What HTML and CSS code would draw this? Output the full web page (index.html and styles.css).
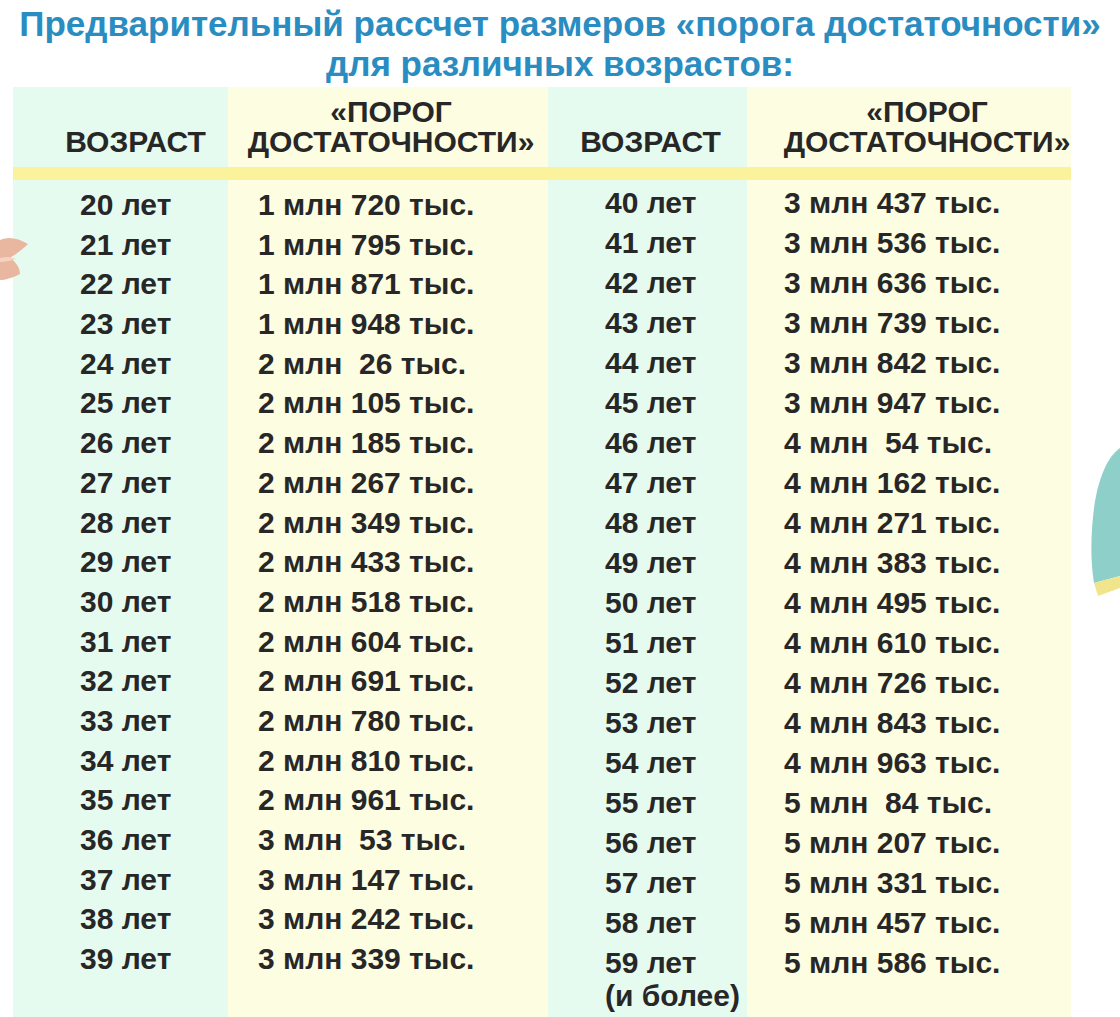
FILE: index.html
```html
<!DOCTYPE html>
<html lang="ru">
<head>
<meta charset="utf-8">
<title>Порог достаточности</title>
<link rel="stylesheet" href="styles.css">
</head>
<body>
<div class="page">
  <h1 class="title">Предварительный рассчет размеров «порога достаточности»<br>для различных возрастов:</h1>
  <div class="table">
    <div class="head">
      <div class="hc c1 h1">ВОЗРАСТ</div>
      <div class="hc c2 h2">«ПОРОГ<br>ДОСТАТОЧНОСТИ»</div>
      <div class="hc c3 h3">ВОЗРАСТ</div>
      <div class="hc c4 h4">«ПОРОГ<br>ДОСТАТОЧНОСТИ»</div>
    </div>
    <div class="stripe"></div>
    <div class="body">
      <div class="col c1 b1">
        <div class="r">20 лет</div><div class="r">21 лет</div><div class="r">22 лет</div><div class="r">23 лет</div><div class="r">24 лет</div>
        <div class="r">25 лет</div><div class="r">26 лет</div><div class="r">27 лет</div><div class="r">28 лет</div><div class="r">29 лет</div>
        <div class="r">30 лет</div><div class="r">31 лет</div><div class="r">32 лет</div><div class="r">33 лет</div><div class="r">34 лет</div>
        <div class="r">35 лет</div><div class="r">36 лет</div><div class="r">37 лет</div><div class="r">38 лет</div><div class="r">39 лет</div>
      </div>
      <div class="col c2 b2">
        <div class="r">1 млн 720 тыс.</div><div class="r">1 млн 795 тыс.</div><div class="r">1 млн 871 тыс.</div><div class="r">1 млн 948 тыс.</div><div class="r">2 млн  26 тыс.</div>
        <div class="r">2 млн 105 тыс.</div><div class="r">2 млн 185 тыс.</div><div class="r">2 млн 267 тыс.</div><div class="r">2 млн 349 тыс.</div><div class="r">2 млн 433 тыс.</div>
        <div class="r">2 млн 518 тыс.</div><div class="r">2 млн 604 тыс.</div><div class="r">2 млн 691 тыс.</div><div class="r">2 млн 780 тыс.</div><div class="r">2 млн 810 тыс.</div>
        <div class="r">2 млн 961 тыс.</div><div class="r">3 млн  53 тыс.</div><div class="r">3 млн 147 тыс.</div><div class="r">3 млн 242 тыс.</div><div class="r">3 млн 339 тыс.</div>
      </div>
      <div class="col c3 b3">
        <div class="r">40 лет</div><div class="r">41 лет</div><div class="r">42 лет</div><div class="r">43 лет</div><div class="r">44 лет</div>
        <div class="r">45 лет</div><div class="r">46 лет</div><div class="r">47 лет</div><div class="r">48 лет</div><div class="r">49 лет</div>
        <div class="r">50 лет</div><div class="r">51 лет</div><div class="r">52 лет</div><div class="r">53 лет</div><div class="r">54 лет</div>
        <div class="r">55 лет</div><div class="r">56 лет</div><div class="r">57 лет</div><div class="r">58 лет</div><div class="r">59 лет</div>
        <div class="r more">(и более)</div>
      </div>
      <div class="col c4 b4">
        <div class="r">3 млн 437 тыс.</div><div class="r">3 млн 536 тыс.</div><div class="r">3 млн 636 тыс.</div><div class="r">3 млн 739 тыс.</div><div class="r">3 млн 842 тыс.</div>
        <div class="r">3 млн 947 тыс.</div><div class="r">4 млн  54 тыс.</div><div class="r">4 млн 162 тыс.</div><div class="r">4 млн 271 тыс.</div><div class="r">4 млн 383 тыс.</div>
        <div class="r">4 млн 495 тыс.</div><div class="r">4 млн 610 тыс.</div><div class="r">4 млн 726 тыс.</div><div class="r">4 млн 843 тыс.</div><div class="r">4 млн 963 тыс.</div>
        <div class="r">5 млн  84 тыс.</div><div class="r">5 млн 207 тыс.</div><div class="r">5 млн 331 тыс.</div><div class="r">5 млн 457 тыс.</div><div class="r">5 млн 586 тыс.</div>
      </div>
    </div>
  </div>
  <svg class="deco deco-left" width="30" height="60" viewBox="0 0 30 60">
    <path d="M0 12 C8 8 18 10 28 16 C22 22 16 26 10 30 C16 34 20 40 20 46 C12 50 5 52 0 52 Z" fill="#e9b79f"/>
    <path d="M0 30 C6 28 12 29 16 31 C10 33 5 34 0 34 Z" fill="#f3d2c2"/>
  </svg>
  <svg class="deco deco-right" width="32" height="160" viewBox="0 0 32 160">
    <path d="M32 0 C20 8 10 30 6 60 C3 85 2 110 6 135 L32 128 Z" fill="#8fcfca"/>
    <path d="M6 135 L32 128 L32 140 L10 148 Z" fill="#f1e58c"/>
  </svg>
</div>
</body>
</html>
```
FILE: styles.css
```css
html, body {
  margin: 0;
  padding: 0;
  background: #ffffff;
  overflow: hidden;
}

.page {
  position: relative;
  width: 1120px;
  height: 1017px;
  overflow: hidden;
  font-family: "Liberation Sans", Arial, sans-serif;
  font-weight: bold;
  color: #272727;
}

.title {
  margin: 4px 0 0 0;
  font-size: 35px;
  line-height: 40px;
  font-weight: bold;
  color: #2a8dc1;
  text-align: center;
  white-space: nowrap;
  height: 83px;
}

.table {
  margin-left: 13px;
  width: 1058px;
}

.head {
  display: grid;
  grid-template-columns: 215px 320px 199px 324px;
  height: 80px;
}

.hc {
  display: flex;
  align-items: flex-end;
  justify-content: center;
  text-align: center;
  font-size: 30px;
  line-height: 30px;
  padding-bottom: 10px;
  box-sizing: border-box;
  white-space: nowrap;
}

.c1, .c3 { background: #e6fbef; }
.c2, .c4 { background: #fdfde1; }

.h1 { padding-left: 30px; }
.h2 { padding-left: 6px; }
.h3 { padding-left: 6px; }
.h4 { padding-left: 36px; }

.stripe {
  height: 13px;
  background: #fbf39c;
}

.body {
  display: grid;
  grid-template-columns: 215px 320px 199px 324px;
  height: 850px;
}

.col {
  padding-top: 5px;
  font-size: 30px;
  box-sizing: border-box;
}

.r {
  height: 39.7px;
  line-height: 39.7px;
  white-space: pre;
}

.b3 .r, .b4 .r {
  height: 40px;
  line-height: 40px;
}

.b3 .more {
  margin-top: -7px;
}

.b1 { padding-left: 67px; }
.b2 { padding-left: 30px; }
.b3 { padding-left: 57px; padding-top: 3px; }
.b4 { padding-left: 37px; padding-top: 3px; }

.deco {
  position: absolute;
  display: block;
}

.deco-left {
  left: 0;
  top: 228px;
}

.deco-right {
  right: 0;
  top: 448px;
}
```
